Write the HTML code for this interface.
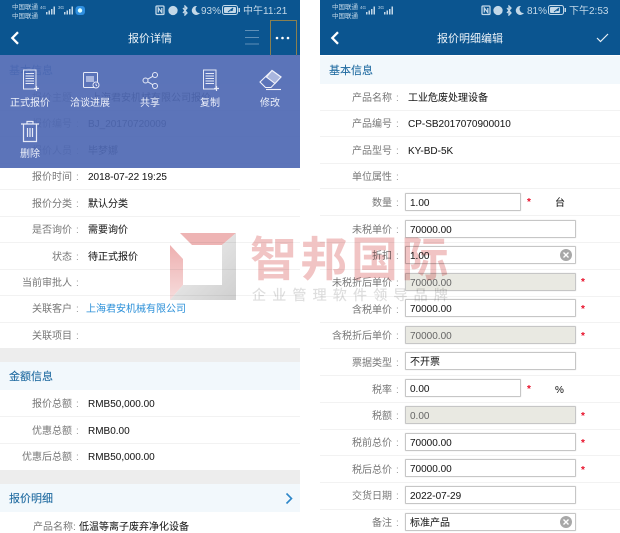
<!DOCTYPE html>
<html lang="zh"><head><meta charset="utf-8"><title>报价</title>
<style>
html,body{margin:0;padding:0;background:#fff}
body{width:620px;height:533px;position:relative;overflow:hidden;font-family:"Liberation Sans","Noto Sans CJK SC",sans-serif;font-size:10px;color:#222;filter:blur(.3px)}
div,svg{position:absolute}
.p{top:0;width:300px;height:533px;overflow:hidden;background:#fff}
.hd{left:0;top:0;width:300px;height:55px;background:#0b5590}
.t{left:0;width:300px;top:31px;text-align:center;color:#eef4f9;font-size:11px;line-height:16px}
.car{color:#c3d8e8;font-size:6.5px;line-height:9px;left:12px;top:3px;width:40px}
.st{color:#c3d8e8;font-size:10px;line-height:14px;top:3px;margin-top:2px;white-space:nowrap}
.sm{color:#c3d8e8;font-size:4.5px;line-height:5px;white-space:nowrap}
.band{left:0;width:300px;height:28px;background:#f2f8fc;color:#1f6aa0;font-size:11px;line-height:30px;text-indent:9px;-webkit-text-stroke:.1px #1f6aa0}
.gray{left:0;width:300px;height:14px;background:#ededed}
.sep{left:0;width:300px;height:1px;background:#f2f2f2}
.l{left:0;width:72px;text-align:right;color:#777;line-height:14px;margin-top:2px;white-space:nowrap}
.c{left:76px;color:#999;line-height:14px;margin-top:2px}
.v{left:88px;color:#1a1a1a;line-height:14px;margin-top:2px;white-space:nowrap;-webkit-text-stroke:.05px #1a1a1a}
.i{left:85px;width:169px;height:16px;border:1px solid #c6c6c6;box-shadow:0 0 1px #ccc;background:#fff;color:#1a1a1a;line-height:20px;text-indent:4px;white-space:nowrap;border-radius:1px;-webkit-text-stroke:.05px #1a1a1a}
.s{width:114px}
.d{background:#e9e9e2;color:#666;-webkit-text-stroke:0}
.r{color:#e8102a;font-size:10px;font-weight:bold;line-height:12px;transform:translate(1px,1px)}
.ov{left:0;top:55px;width:300px;height:113px;background:rgba(80,105,180,.93)}
.m{width:60px;text-align:center;color:#eef1fa;line-height:14px;font-size:10px;margin-top:2px}
.x{width:12px;height:12px}
.wm{left:250px;top:226px;font-family:"Noto Sans CJK SC",sans-serif;font-weight:700;font-size:47px;line-height:60px;letter-spacing:3.5px;color:#f1c4c4;mix-blend-mode:multiply;white-space:nowrap}
.ws{left:252px;top:287px;font-size:14px;line-height:16px;letter-spacing:6.2px;color:#dedede;mix-blend-mode:multiply;white-space:nowrap;-webkit-text-stroke:.2px #dedede}
</style></head><body>

<div class="p" style="left:0">
<div class="hd"></div>
<div class="car">中国联通<br>中国联通</div>
<div class="sm" style="left:40px;top:5px">4G</div><div class="sm" style="left:58px;top:5px">3G</div>
<svg style="left:40px;top:4px" width="46" height="12" viewBox="0 0 46 12" fill="#c3d8e8"><rect x="6" y="8" width="1.500" height="2.500"/><rect x="8.500" y="6.500" width="1.500" height="4"/><rect x="11" y="5" width="1.500" height="5.500"/><rect x="13.500" y="2.500" width="1.500" height="8"/><rect x="24" y="8" width="1.500" height="2.500"/><rect x="26.500" y="6.500" width="1.500" height="4"/><rect x="29" y="5" width="1.500" height="5.500"/><rect x="31.500" y="2.500" width="1.500" height="8"/><rect x="35.500" y="2" width="9.500" height="9" rx="3" fill="#2f8fe0"/><circle cx="40" cy="6.500" r="2.200" fill="#dff"/></svg>
<svg style="left:155px;top:5px" width="46" height="11" viewBox="0 0 46 11" fill="none" stroke="#c3d8e8" stroke-width="1.300"><rect x="1" y="1" width="8" height="8.500" rx="1"/><path d="M3.300 7.500V3l3.500 4.500V3"/><circle cx="18" cy="5.500" r="4" fill="#c3d8e8"/><path d="M28 3l4 5-2 2V1l2 2-4 5"/><path d="M42 1a4.500 4.500 0 1 0 3 7a4 4 0 0 1-3-7z" fill="#c3d8e8" stroke="none"/></svg>
<div class="st" style="left:201px">93%</div>
<svg style="left:222px;top:5px" width="19" height="10" viewBox="0 0 19 10"><rect x=".5" y=".5" width="15" height="9" rx="2" fill="none" stroke="#c3d8e8"/><rect x="2" y="2" width="12" height="6" rx="1" fill="#c3d8e8"/><rect x="16.500" y="3" width="1.500" height="4" fill="#c3d8e8"/><path d="M6 7l5-4-1.500 2.500L11 5" stroke="#0b5590" fill="none"/></svg>
<div class="st" style="left:243px">中午11:21</div>
<svg style="left:10px;top:31px" width="10" height="14" viewBox="0 0 10 14"><path d="M8 1.200L2.300 7 8 12.800" fill="none" stroke="#fff" stroke-width="2.300"/></svg>
<div class="t">报价详情</div>
<svg style="left:244px;top:29px" width="16" height="17" viewBox="0 0 16 17"><path d="M1 1.500h14M1 8.500h14M1 15h14" stroke="#5f90b8" stroke-width="1"/></svg>
<div style="left:270px;top:20px;width:25px;height:35px;border:1px solid #8a8050"></div>
<svg style="left:275px;top:36px" width="15" height="4" viewBox="0 0 15 4" fill="#fff"><circle cx="2" cy="2" r="1.300"/><circle cx="7.500" cy="2" r="1.300"/><circle cx="13" cy="2" r="1.300"/></svg>

<div class="band" style="top:56px">基本信息</div>
<div class="l" style="top:90px">报价主题</div><div class="v" style="top:90px;left:91px">上海君安机械有限公司报价</div>
<div class="sep" style="top:110px"></div>
<div class="l" style="top:116px">报价编号</div><div class="c" style="top:116px">:</div><div class="v" style="top:116px">BJ_20170720009</div>
<div class="sep" style="top:136px"></div>
<div class="l" style="top:143px">报价人员</div><div class="c" style="top:143px">:</div><div class="v" style="top:143px">毕梦娜</div>
<div class="sep" style="top:163px"></div>
<div class="l" style="top:169px">报价时间</div><div class="c" style="top:169px">:</div><div class="v" style="top:169px">2018-07-22 19:25</div>
<div class="sep" style="top:189px"></div>
<div class="l" style="top:196px">报价分类</div><div class="c" style="top:196px">:</div><div class="v" style="top:196px">默认分类</div>
<div class="sep" style="top:216px"></div>
<div class="l" style="top:222px">是否询价</div><div class="c" style="top:222px">:</div><div class="v" style="top:222px">需要询价</div>
<div class="sep" style="top:242px"></div>
<div class="l" style="top:249px">状态</div><div class="c" style="top:249px">:</div><div class="v" style="top:249px">待正式报价</div>
<div class="sep" style="top:269px"></div>
<div class="l" style="top:275px">当前审批人</div><div class="c" style="top:275px">:</div>
<div class="sep" style="top:295px"></div>
<div class="l" style="top:301px">关联客户</div><div class="c" style="top:301px">:</div><div class="v" style="top:301px;left:86px;color:#2a8fd8;-webkit-text-stroke:0">上海君安机械有限公司</div>
<div class="sep" style="top:322px"></div>
<div class="l" style="top:328px">关联项目</div><div class="c" style="top:328px">:</div>
<div class="gray" style="top:348px"></div>
<div class="band" style="top:362px">金额信息</div>
<div class="l" style="top:396px">报价总额</div><div class="c" style="top:396px">:</div><div class="v" style="top:396px">RMB50,000.00</div>
<div class="sep" style="top:416px"></div>
<div class="l" style="top:423px">优惠总额</div><div class="c" style="top:423px">:</div><div class="v" style="top:423px">RMB0.00</div>
<div class="sep" style="top:443px"></div>
<div class="l" style="top:449px">优惠后总额</div><div class="c" style="top:449px">:</div><div class="v" style="top:449px">RMB50,000.00</div>
<div class="gray" style="top:470px"></div>
<div class="band" style="top:484px">报价明细</div>
<svg style="left:285px;top:492px" width="8" height="13" viewBox="0 0 8 13"><path d="M1.500 1.500L6.500 6.500 1.500 11.500" fill="none" stroke="#2d86c8" stroke-width="1.600"/></svg>
<div class="l" style="top:519px;left:33px;width:auto">产品名称:</div><div class="v" style="top:519px;left:79px">低温等离子废弃净化设备</div>

<div class="ov"></div>
<svg style="left:22px;top:69px" width="18" height="23" viewBox="0 0 18 23" fill="none" stroke="#e6eaf7" stroke-width="1"><path d="M1.500 1h12.500v19H1.500z"/><path d="M3.500 4.500h8.500M3.500 7h8.500M3.500 9.500h8.500M3.500 12h8.500M3.500 14.500h8.500"/><path d="M12 19.500h5M14.500 17v5" stroke-width="1.200"/></svg>
<svg style="left:82px;top:71px" width="18" height="18" viewBox="0 0 18 18" fill="none" stroke="#e6eaf7" stroke-width="1"><rect x="1.500" y="1.500" width="14" height="15" rx="1"/><rect x="4" y="5" width="8" height="6" fill="#a9b6de" stroke="none"/><circle cx="14" cy="14" r="3" fill="#5069b3"/><path d="M14 12.500V14l1 1"/></svg>
<svg style="left:142px;top:72px" width="17" height="17" viewBox="0 0 17 17" fill="none" stroke="#e6eaf7" stroke-width="1"><circle cx="3.500" cy="8.500" r="2.500"/><circle cx="13" cy="3" r="2.500"/><circle cx="13" cy="14" r="2.500"/><path d="M5.700 7.200L10.800 4.300M5.700 9.800L10.800 12.700"/></svg>
<svg style="left:202px;top:69px" width="18" height="23" viewBox="0 0 18 23" fill="none" stroke="#e6eaf7" stroke-width="1"><path d="M1.500 1h12.500v19H1.500z"/><path d="M3.500 4.500h8.500M3.500 7h8.500M3.500 9.500h8.500M3.500 12h8.500M3.500 14.500h8.500"/><path d="M12 19.500h5M14.500 17v5" stroke-width="1.200"/></svg>
<svg style="left:259px;top:69px" width="23" height="23" viewBox="0 0 23 23" fill="none" stroke="#f0f2fa" stroke-width="1.100"><path d="M1 13L13 1.500l9 6.500-10 10.500H6.500z"/><path d="M13 1.500l9 6.500-6 6.500-8.500-6.500z" fill="#a9b6de"/><path d="M7 20.500h15"/></svg>
<svg style="left:20px;top:120px" width="20" height="23" viewBox="0 0 20 23" fill="none" stroke="#e6eaf7" stroke-width="1.200"><path d="M1 4h18M7 4V1.500h6V4"/><path d="M3.500 4v17.500h13V4"/><path d="M7.500 8v9M10 8v9M12.500 8v9"/></svg>
<div class="m" style="left:0;top:95px">正式报价</div>
<div class="m" style="left:60px;top:95px">洽谈进展</div>
<div class="m" style="left:120px;top:95px">共享</div>
<div class="m" style="left:180px;top:95px">复制</div>
<div class="m" style="left:240px;top:95px">修改</div>
<div class="m" style="left:0;top:146px">删除</div>
</div>

<div class="p" style="left:320px">
<div class="hd"></div>
<div class="car">中国联通<br>中国联通</div>
<div class="sm" style="left:40px;top:5px">4G</div><div class="sm" style="left:58px;top:5px">3G</div>
<svg style="left:40px;top:4px" width="34" height="12" viewBox="0 0 34 12" fill="#c3d8e8"><rect x="6" y="8" width="1.500" height="2.500"/><rect x="8.500" y="6.500" width="1.500" height="4"/><rect x="11" y="5" width="1.500" height="5.500"/><rect x="13.500" y="2.500" width="1.500" height="8"/><rect x="24" y="8" width="1.500" height="2.500"/><rect x="26.500" y="6.500" width="1.500" height="4"/><rect x="29" y="5" width="1.500" height="5.500"/><rect x="31.500" y="2.500" width="1.500" height="8"/></svg>
<svg style="left:161px;top:5px" width="46" height="11" viewBox="0 0 46 11" fill="none" stroke="#c3d8e8" stroke-width="1.300"><rect x="1" y="1" width="8" height="8.500" rx="1"/><path d="M3.300 7.500V3l3.500 4.500V3"/><circle cx="17" cy="5.500" r="4" fill="#c3d8e8"/><path d="M26 3l4 5-2 2V1l2 2-4 5"/><path d="M40 1a4.500 4.500 0 1 0 3 7a4 4 0 0 1-3-7z" fill="#c3d8e8" stroke="none"/></svg>
<div class="st" style="left:207px">81%</div>
<svg style="left:228px;top:5px" width="19" height="10" viewBox="0 0 19 10"><rect x=".5" y=".5" width="15" height="9" rx="2" fill="none" stroke="#c3d8e8"/><rect x="2" y="2" width="10" height="6" rx="1" fill="#c3d8e8"/><rect x="16.500" y="3" width="1.500" height="4" fill="#c3d8e8"/><path d="M6 7l5-4-1.500 2.500L11 5" stroke="#0b5590" fill="none"/></svg>
<div class="st" style="left:249px">下午2:53</div>
<svg style="left:10px;top:31px" width="10" height="14" viewBox="0 0 10 14"><path d="M8 1.200L2.300 7 8 12.800" fill="none" stroke="#fff" stroke-width="2.300"/></svg>
<div class="t">报价明细编辑</div>
<svg style="left:276px;top:33px" width="13" height="10" viewBox="0 0 13 10"><path d="M1 5l3.500 3.500L12 1" fill="none" stroke="#e8f0f6" stroke-width="1.200"/></svg>

<div class="band" style="top:56px">基本信息</div>
<div class="l" style="top:90px">产品名称</div><div class="c" style="top:90px">:</div><div class="v" style="top:90px">工业危废处理设备</div>
<div class="sep" style="top:110px"></div>
<div class="l" style="top:116px">产品编号</div><div class="c" style="top:116px">:</div><div class="v" style="top:116px">CP-SB2017070900010</div>
<div class="sep" style="top:136px"></div>
<div class="l" style="top:143px">产品型号</div><div class="c" style="top:143px">:</div><div class="v" style="top:143px">KY-BD-5K</div>
<div class="sep" style="top:163px"></div>
<div class="l" style="top:169px">单位属性</div><div class="c" style="top:169px">:</div>
<div class="sep" style="top:188px"></div>
<div class="l" style="top:195px">数量</div><div class="c" style="top:195px">:</div><div class="i s" style="top:193px">1.00</div><div class="r" style="left:206px;top:196px">*</div><div class="v" style="left:235px;top:195px">台</div>
<div class="sep" style="top:215px"></div>
<div class="l" style="top:222px">未税单价</div><div class="c" style="top:222px">:</div><div class="i" style="top:220px">70000.00</div>
<div class="sep" style="top:242px"></div>
<div class="i" style="top:246px">1.00</div><div class="l" style="top:248px">折扣</div><div class="c" style="top:248px">:</div>
<svg class="x" style="left:240px;top:249px" viewBox="0 0 12 12"><circle cx="6" cy="6" r="6" fill="#a8a8a8"/><path d="M3.500 3.500l5 5M8.500 3.500l-5 5" stroke="#fff" stroke-width="1.400"/></svg>
<div class="sep" style="top:269px"></div>
<div class="l" style="top:275px">未税折后单价</div><div class="c" style="top:275px">:</div><div class="i d" style="top:273px">70000.00</div><div class="r" style="left:260px;top:276px">*</div>
<div class="sep" style="top:296px"></div>
<div class="l" style="top:302px">含税单价</div><div class="c" style="top:302px">:</div><div class="i" style="top:299px">70000.00</div><div class="r" style="left:260px;top:303px">*</div>
<div class="sep" style="top:322px"></div>
<div class="l" style="top:328px">含税折后单价</div><div class="c" style="top:328px">:</div><div class="i d" style="top:326px">70000.00</div><div class="r" style="left:260px;top:330px">*</div>
<div class="sep" style="top:348px"></div>
<div class="l" style="top:355px">票据类型</div><div class="c" style="top:355px">:</div><div class="i" style="top:352px">不开票</div>
<div class="sep" style="top:375px"></div>
<div class="l" style="top:382px">税率</div><div class="c" style="top:382px">:</div><div class="i s" style="top:379px">0.00</div><div class="r" style="left:206px;top:383px">*</div><div class="v" style="left:235px;top:382px">%</div>
<div class="sep" style="top:402px"></div>
<div class="l" style="top:408px">税额</div><div class="c" style="top:408px">:</div><div class="i d" style="top:406px">0.00</div><div class="r" style="left:260px;top:410px">*</div>
<div class="sep" style="top:429px"></div>
<div class="l" style="top:435px">税前总价</div><div class="c" style="top:435px">:</div><div class="i" style="top:433px">70000.00</div><div class="r" style="left:260px;top:437px">*</div>
<div class="sep" style="top:455px"></div>
<div class="l" style="top:462px">税后总价</div><div class="c" style="top:462px">:</div><div class="i" style="top:459px">70000.00</div><div class="r" style="left:260px;top:464px">*</div>
<div class="sep" style="top:482px"></div>
<div class="l" style="top:488px">交货日期</div><div class="c" style="top:488px">:</div><div class="i" style="top:486px">2022-07-29</div>
<div class="sep" style="top:509px"></div>
<div class="l" style="top:515px">备注</div><div class="c" style="top:515px">:</div><div class="i" style="top:513px">标准产品</div>
<svg class="x" style="left:240px;top:516px" viewBox="0 0 12 12"><circle cx="6" cy="6" r="6" fill="#a8a8a8"/><path d="M3.500 3.500l5 5M8.500 3.500l-5 5" stroke="#fff" stroke-width="1.400"/></svg>
</div>

<svg style="left:170px;top:233px;mix-blend-mode:multiply" width="67" height="68" viewBox="0 0 67 68">
<defs><linearGradient id="g" x1="0" y1="0" x2="1" y2="1"><stop offset="0" stop-color="#f4f4f4"/><stop offset="1" stop-color="#cfcfcf"/></linearGradient><linearGradient id="h" x1="0" y1="0" x2="0" y2="1"><stop offset="0" stop-color="#eeb0b0"/><stop offset="1" stop-color="#f6dcdc"/></linearGradient></defs>
<path d="M10 0H66L52 12H22z" fill="#eeb4b4"/>
<path d="M0 12L13 26V52L0 67z" fill="url(#h)"/>
<path d="M66 0V67H0L13 52H52V12z" fill="url(#g)"/>
</svg>
<div class="wm">智邦国际</div>
<div class="ws">企业管理软件领导品牌</div>
</body></html>
